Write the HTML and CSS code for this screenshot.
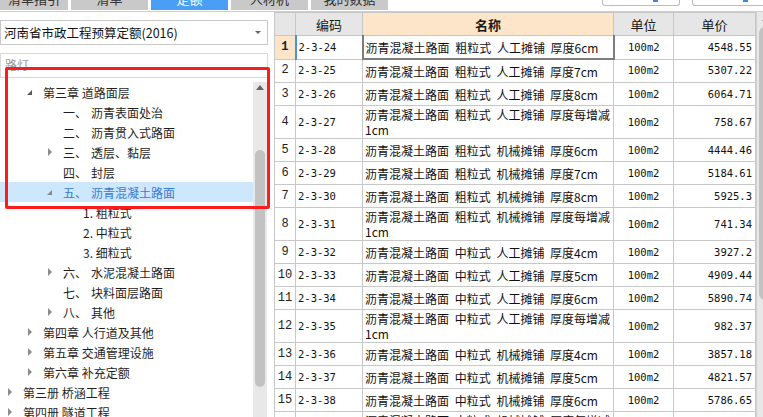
FILE: index.html
```html
<!DOCTYPE html>
<html lang="zh-CN">
<head>
    <meta charset="UTF-8">
    <title>定额</title>
    <link rel="stylesheet" href="styles.css">
</head>
<body>

    <!-- 顶部页签 -->
    <div class="topbar">
        <div class="tab"><span>清单指引</span></div>
        <div class="tab"><span>清单</span></div>
        <div class="tab active"><span>定额</span></div>
        <div class="tab"><span>人材机</span></div>
        <div class="tab"><span>我的数据</span></div>
        <div class="tools">
            <div class="tool-btn"><i class="mark"></i></div>
            <div class="tool-btn last"><i class="mark"></i></div>
        </div>
    </div>

    <div class="main">
        <!-- 左侧定额库 -->
        <div class="side">
            <div class="select">
                <span>河南省市政工程预算定额(2016)</span>
                <i class="caret"></i>
            </div>
            <div class="search">路灯</div>

            <div class="tree-wrap">
                <div class="tree">
                    <div class="row l1"><span class="tw"><i class="open"></i></span>第三章 道路面层</div>
                    <div class="row l2"><span class="tw"></span><span class="n">一、</span>沥青表面处治</div>
                    <div class="row l2"><span class="tw"></span><span class="n">二、</span>沥青贯入式路面</div>
                    <div class="row l2"><span class="tw"><i class="closed"></i></span><span class="n">三、</span>透层、黏层</div>
                    <div class="row l2"><span class="tw"></span><span class="n">四、</span>封层</div>
                    <div class="row l2 selected"><span class="tw"><i class="open"></i></span><span class="n">五、</span>沥青混凝土路面</div>
                    <div class="row l3"><span class="tw"></span>1. 粗粒式</div>
                    <div class="row l3"><span class="tw"></span>2. 中粒式</div>
                    <div class="row l3"><span class="tw"></span>3. 细粒式</div>
                    <div class="row l2"><span class="tw"><i class="closed"></i></span><span class="n">六、</span>水泥混凝土路面</div>
                    <div class="row l2"><span class="tw"></span><span class="n">七、</span>块料面层路面</div>
                    <div class="row l2"><span class="tw"><i class="closed"></i></span><span class="n">八、</span>其他</div>
                    <div class="row l1"><span class="tw"><i class="closed"></i></span>第四章 人行道及其他</div>
                    <div class="row l1"><span class="tw"><i class="closed"></i></span>第五章 交通管理设施</div>
                    <div class="row l1"><span class="tw"><i class="closed"></i></span>第六章 补充定额</div>
                    <div class="row l0"><span class="tw"><i class="closed"></i></span>第三册 桥涵工程</div>
                    <div class="row l0"><span class="tw"><i class="closed"></i></span>第四册 隧道工程</div>
                </div>
                <div class="vscroll">
                    <i class="up"></i>
                    <div class="thumb"></div>
                </div>
            </div>

            <!-- 红色标注框 -->
            <div class="mark-box"></div>
        </div>

        <!-- 右侧定额列表 -->
        <div class="grid-wrap">
            <table class="grid">
                <colgroup>
                    <col style="width:21px">
                    <col style="width:67px">
                    <col style="width:251px">
                    <col style="width:60px">
                    <col style="width:82px">
                </colgroup>
                <thead>
                    <tr>
                        <th></th>
                        <th>编码</th>
                        <th class="cur">名称</th>
                        <th>单位</th>
                        <th>单价</th>
                    </tr>
                </thead>
                <tbody>
                    <tr class="current">
                        <td class="num">1</td>
                        <td class="code">2-3-24</td>
                        <td class="name">沥青混凝土路面 粗粒式 人工摊铺 厚度6cm</td>
                        <td class="unit">100m2</td>
                        <td class="price">4548.55</td>
                    </tr>
                    <tr>
                        <td class="num">2</td>
                        <td class="code">2-3-25</td>
                        <td class="name">沥青混凝土路面 粗粒式 人工摊铺 厚度7cm</td>
                        <td class="unit">100m2</td>
                        <td class="price">5307.22</td>
                    </tr>
                    <tr>
                        <td class="num">3</td>
                        <td class="code">2-3-26</td>
                        <td class="name">沥青混凝土路面 粗粒式 人工摊铺 厚度8cm</td>
                        <td class="unit">100m2</td>
                        <td class="price">6064.71</td>
                    </tr>
                    <tr class="tall">
                        <td class="num">4</td>
                        <td class="code">2-3-27</td>
                        <td class="name">沥青混凝土路面 粗粒式 人工摊铺 厚度每增减<br>1cm</td>
                        <td class="unit">100m2</td>
                        <td class="price">758.67</td>
                    </tr>
                    <tr>
                        <td class="num">5</td>
                        <td class="code">2-3-28</td>
                        <td class="name">沥青混凝土路面 粗粒式 机械摊铺 厚度6cm</td>
                        <td class="unit">100m2</td>
                        <td class="price">4444.46</td>
                    </tr>
                    <tr>
                        <td class="num">6</td>
                        <td class="code">2-3-29</td>
                        <td class="name">沥青混凝土路面 粗粒式 机械摊铺 厚度7cm</td>
                        <td class="unit">100m2</td>
                        <td class="price">5184.61</td>
                    </tr>
                    <tr>
                        <td class="num">7</td>
                        <td class="code">2-3-30</td>
                        <td class="name">沥青混凝土路面 粗粒式 机械摊铺 厚度8cm</td>
                        <td class="unit">100m2</td>
                        <td class="price">5925.3</td>
                    </tr>
                    <tr class="tall">
                        <td class="num">8</td>
                        <td class="code">2-3-31</td>
                        <td class="name">沥青混凝土路面 粗粒式 机械摊铺 厚度每增减<br>1cm</td>
                        <td class="unit">100m2</td>
                        <td class="price">741.34</td>
                    </tr>
                    <tr>
                        <td class="num">9</td>
                        <td class="code">2-3-32</td>
                        <td class="name">沥青混凝土路面 中粒式 人工摊铺 厚度4cm</td>
                        <td class="unit">100m2</td>
                        <td class="price">3927.2</td>
                    </tr>
                    <tr>
                        <td class="num">10</td>
                        <td class="code">2-3-33</td>
                        <td class="name">沥青混凝土路面 中粒式 人工摊铺 厚度5cm</td>
                        <td class="unit">100m2</td>
                        <td class="price">4909.44</td>
                    </tr>
                    <tr>
                        <td class="num">11</td>
                        <td class="code">2-3-34</td>
                        <td class="name">沥青混凝土路面 中粒式 人工摊铺 厚度6cm</td>
                        <td class="unit">100m2</td>
                        <td class="price">5890.74</td>
                    </tr>
                    <tr class="tall">
                        <td class="num">12</td>
                        <td class="code">2-3-35</td>
                        <td class="name">沥青混凝土路面 中粒式 人工摊铺 厚度每增减<br>1cm</td>
                        <td class="unit">100m2</td>
                        <td class="price">982.37</td>
                    </tr>
                    <tr>
                        <td class="num">13</td>
                        <td class="code">2-3-36</td>
                        <td class="name">沥青混凝土路面 中粒式 机械摊铺 厚度4cm</td>
                        <td class="unit">100m2</td>
                        <td class="price">3857.18</td>
                    </tr>
                    <tr>
                        <td class="num">14</td>
                        <td class="code">2-3-37</td>
                        <td class="name">沥青混凝土路面 中粒式 机械摊铺 厚度5cm</td>
                        <td class="unit">100m2</td>
                        <td class="price">4821.57</td>
                    </tr>
                    <tr>
                        <td class="num">15</td>
                        <td class="code">2-3-38</td>
                        <td class="name">沥青混凝土路面 中粒式 机械摊铺 厚度6cm</td>
                        <td class="unit">100m2</td>
                        <td class="price">5786.65</td>
                    </tr>
                    <tr class="tall">
                        <td class="num">16</td>
                        <td class="code">2-3-39</td>
                        <td class="name">沥青混凝土路面 中粒式 机械摊铺 厚度每增减<br>1cm</td>
                        <td class="unit">100m2</td>
                        <td class="price"></td>
                    </tr>
                </tbody>
            </table>
            <div class="gscroll">
                <i class="up"></i>
                <div class="thumb"></div>
            </div>
        </div>
    </div>

</body>
</html>
```

FILE: styles.css
```css
/* 页面基础 */
body {
    margin: 0;
    width: 763px;
    height: 417px;
    overflow: hidden;
    background-color: #fff;
    font-family: "Noto Sans CJK SC", "Noto Sans", sans-serif;
    color: #1f1f1f;
}

/* 顶部页签 */
.topbar {
    display: flex;
    gap: 3px;
    height: 11px;
    border-bottom: 1px solid #cfcfcf;
}

.tab {
    width: 77px;
    height: 10px;
    overflow: hidden;
    background-color: #c9c9c9;
    color: #333;
    font-size: 13px;
    text-align: center;
}

.tab:first-child {
    width: 68px;
}

.tab span {
    display: block;
    line-height: 16px;
    margin-top: -9px;
}

.tab.active {
    background-color: #4a9ef4;
    color: #fff;
}

.tools {
    margin-left: auto;
    display: flex;
    gap: 12px;
}

.tool-btn {
    position: relative;
    width: 78px;
    height: 6px;
    box-sizing: border-box;
    border: 1px solid #bcbcbc;
    border-top: none;
    border-radius: 0 0 3px 3px;
    background-color: #fff;
}

.tool-btn.last {
    width: 71px;
    border-right: none;
    border-radius: 0 0 0 3px;
}

.tool-btn .mark {
    display: block;
    width: 5px;
    height: 2px;
    margin-left: 50px;
    background-color: #3a86e0;
}

.main {
    display: flex;
    height: 405px;
    overflow: hidden;
}

/* 左侧 */
.side {
    position: relative;
    width: 274px;
    flex-shrink: 0;
    padding-top: 8px;
    box-sizing: border-box;
}

.select {
    display: flex;
    align-items: center;
    justify-content: space-between;
    width: 268px;
    height: 25px;
    box-sizing: border-box;
    padding: 0 6px 0 3px;
    border: 1px solid #c9c9c9;
    font-size: 12.5px;
    color: #111;
}

.caret {
    width: 0;
    height: 0;
    border-top: 3px solid #666;
    border-left: 3px solid transparent;
    border-right: 3px solid transparent;
}

.search {
    width: 268px;
    height: 25px;
    box-sizing: border-box;
    margin-top: 8px;
    padding: 1px 4px 0;
    border: 1px solid #d9d9d9;
    font-size: 12px;
    line-height: 20px;
    color: #9a9a9a;
}

.tree-wrap {
    display: flex;
    margin-top: 4px;
    height: 335px;
}

.tree {
    width: 253px;
    overflow: hidden;
}

.row {
    display: flex;
    align-items: center;
    height: 20px;
    font-size: 12px;
    white-space: nowrap;
    color: #1f1f1f;
}

.row.l0 { padding-left: 6px; }
.row.l1 { padding-left: 26px; }
.row.l2 { padding-left: 46px; }
.row.l3 { padding-left: 66px; }

.row.selected {
    background-color: #cde8fd;
    color: #3a7bd4;
}

.tw {
    display: flex;
    align-items: center;
    width: 17px;
    flex-shrink: 0;
}

.n {
    display: inline-block;
    width: 28px;
}

/* 树节点三角 */
.open {
    width: 0;
    height: 0;
    margin-left: 1px;
    border-left: 5px solid transparent;
    border-bottom: 5px solid #5a5a5a;
}

.selected .open {
    border-bottom-color: #8a8a8a;
}

.closed {
    width: 0;
    height: 0;
    margin-left: 2px;
    border-top: 4px solid transparent;
    border-bottom: 4px solid transparent;
    border-left: 4px solid #8c8c8c;
}

/* 滚动条 */
.vscroll {
    display: flex;
    flex-direction: column;
    align-items: center;
    width: 14px;
    background-color: #e8e8e8;
}

.up {
    width: 0;
    height: 0;
    margin-top: 3px;
    border-bottom: 5px solid #666;
    border-left: 4px solid transparent;
    border-right: 4px solid transparent;
}

.vscroll .thumb {
    width: 10px;
    height: 237px;
    margin-top: 60px;
    border-radius: 5px;
    background-color: #c2c2c2;
}

/* 红框标注 */
.mark-box {
    position: absolute;
    left: 5px;
    top: 55px;
    width: 265px;
    height: 142px;
    box-sizing: border-box;
    border: 3px solid #fb1d1d;
    border-radius: 2px;
}

/* 右侧表格 */
.grid-wrap {
    display: flex;
    flex-shrink: 0;
}

.grid {
    width: 481px;
    table-layout: fixed;
    border-collapse: collapse;
    flex-shrink: 0;
    align-self: flex-start;
}

.grid th {
    height: 22px;
    padding: 0;
    background-color: #e6e6e6;
    border: 1px solid #c6c6c6;
    font-size: 13px;
    font-weight: normal;
    color: #1a1a1a;
}

.grid th.cur {
    background-color: #fde5c9;
    font-weight: bold;
}

.grid td {
    height: 22px;
    padding: 0 2px;
    border: 1px solid #c8c8c8;
    white-space: nowrap;
    overflow: hidden;
    font-size: 12px;
    line-height: 15px;
    color: #111;
}

.grid tr.tall td {
    height: 32px;
}

.grid td.num {
    padding: 0;
    text-align: center;
    font-family: "Liberation Mono", monospace;
    font-size: 12px;
    color: #222;
}

.grid td.code,
.grid td.unit,
.grid td.price {
    font-family: "DejaVu Sans Mono", monospace;
    font-size: 10.5px;
}

.grid td.unit {
    text-align: center;
}

.grid td.price {
    text-align: right;
    padding-right: 3px;
}

.grid td.name {
    word-spacing: 3px;
}

/* 当前行 */
.grid tr.current td.num {
    background-color: #fde5c9;
    font-weight: bold;
}

.grid tr.current td.code {
    border-left: 2px solid #4a90e2;
    border-top: 1px solid #4a90e2;
}

.grid tr.current td.name {
    border: 2px solid #7c7c7c;
    border-top: 1px solid #4a90e2;
}

.gscroll {
    display: flex;
    flex-direction: column;
    align-items: center;
    width: 17px;
    flex-shrink: 0;
    background-color: #e8e8e8;
    border-left: 1px solid #d0d0d0;
}

.gscroll .up {
    margin-top: 4px;
}

.gscroll .thumb {
    width: 13px;
    height: 273px;
    margin-top: 6px;
    border-radius: 6px;
    background-color: #c2c2c2;
}
```
